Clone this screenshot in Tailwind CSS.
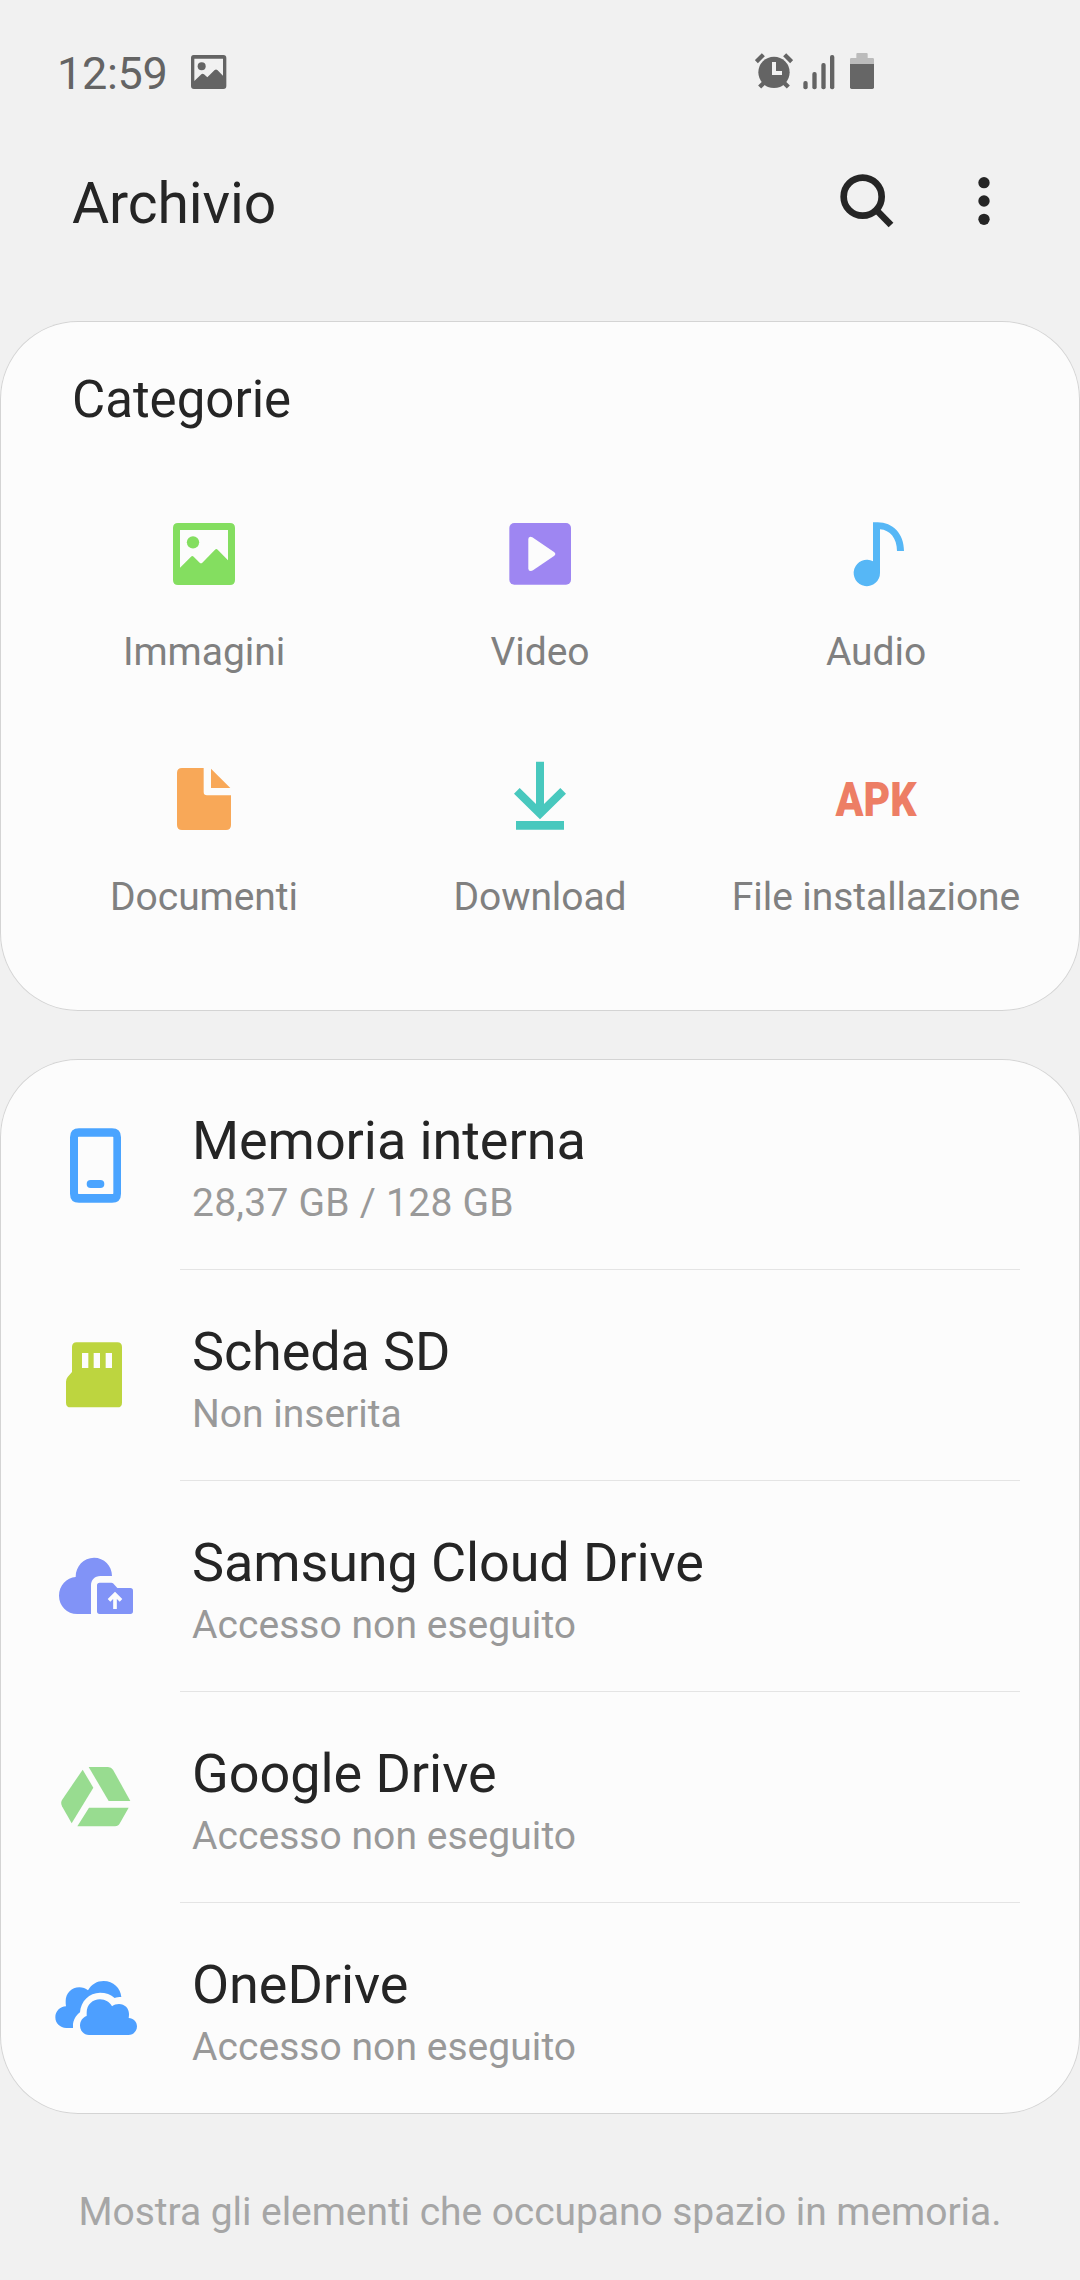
<!DOCTYPE html>
<html lang="it">
<head>
<meta charset="utf-8">
<title>Archivio</title>
<script src="https://cdn.jsdelivr.net/npm/@tailwindcss/browser@4"></script>
</head>
<body class="bg-[#f1f1f1] font-['Roboto',sans-serif] text-[#252525]">
<div class="flex h-[2280px] w-[1080px] flex-col overflow-hidden">

  <!-- Status bar -->
  <div class="mt-[44px] flex h-[60px] items-center pr-[206px] pl-[57px] text-[#646464]">
    <span class="w-[133px] text-[45px] leading-[60px] tracking-[-0.3px]">12:59</span>
    <svg class="h-[44px] w-[38px]" viewBox="570 66 114 132" fill="currentColor"><path fill-rule="evenodd" d="M581 75H670Q679 75 679 84V168Q679 177 670 177H582Q573 177 573 168V84Q573 75 581 75ZM583 86V153L604 133Q608 130 612 133L622 142L644 120Q648 117 652 120L669 137V86Z"/><circle cx="605" cy="109" r="12"/></svg>
    <svg class="ml-auto h-[44px] w-[38px]" viewBox="105 66 114 132" fill="currentColor"><circle cx="162" cy="127" r="47"/><path d="M156 96H168V123H186V135H156Z" fill="#f1f1f1"/><path d="M109 95L130 74M215 95L194 74M119 171L132 158M205 171L192 158" fill="none" stroke="currentColor" stroke-width="13"/></svg>
    <svg class="ml-[10px] h-[44px] w-[32px]" viewBox="249 66 96 132" fill="currentColor"><rect x="250" y="153" width="13" height="25" rx="6"/><rect x="277" y="126" width="13" height="52" rx="6"/><rect x="304" y="99" width="13" height="79" rx="6"/><rect x="330" y="75" width="13" height="103" rx="6"/></svg>
    <svg class="ml-[15px] h-[44px] w-[24px]" viewBox="390 66 72 132"><path d="M412 69H440Q443 69 443 72V84H458Q462 84 462 88V102H390V88Q390 84 394 84H409V72Q409 69 412 69Z" fill="#bcbcbc"/><path d="M390 102H462V172Q462 177 457 177H395Q390 177 390 172Z" fill="#666"/></svg>
  </div>

  <!-- App bar -->
  <header class="mt-[59px] flex h-[80px] items-center pr-[84px] pl-[72px]">
    <h1 class="pt-[2px] text-[57px] leading-[80px] tracking-[-0.1px]">Archivio</h1>
    <svg class="ml-auto h-[60px] w-[60px]" viewBox="348 429 180 180" fill="none" stroke="#252525" stroke-width="20"><circle cx="428" cy="500" r="57"/><path d="M469 540L513 585"/></svg>
    <svg class="ml-[76px] h-[60px] w-[24px]" viewBox="756 429 72 180" fill="#252525"><circle cx="792" cy="458" r="17"/><circle cx="792" cy="513" r="17"/><circle cx="792" cy="568" r="17"/></svg>
  </header>

  <!-- Categories -->
  <section class="mt-[78px] h-[690px] rounded-[78px] bg-[#fcfcfc] pt-[49px] inset-ring inset-ring-[#d4d4d4]">
    <h2 class="pl-[72px] text-[51px] leading-[60px]">Categorie</h2>
    <div class="mx-[36px] mt-[84px] grid grid-cols-3 gap-y-[83px] text-[39px] leading-[48px] tracking-[-0.06px] text-[#808080]">
      <div class="flex flex-col items-center gap-[34px]">
        <svg class="size-[80px]" viewBox="492 642 240 240" fill="#84de60"><path fill-rule="evenodd" d="M534 669H690Q705 669 705 684V840Q705 855 690 855H534Q519 855 519 840V684Q519 669 534 669ZM540 690V803L573 770Q577 766 581 770L599 788Q603 792 607 788L645 749Q649 745 653 749L684 781V690Z"/><circle cx="579" cy="727" r="18.500"/></svg>
        <span>Immagini</span>
      </div>
      <div class="flex flex-col items-center gap-[34px]">
        <svg class="size-[80px]" viewBox="300 42 240 240" fill="#9e86f2"><rect x="328" y="69" width="185" height="185" rx="15"/><path d="M385 117Q385 111 391 110Q394 110 397 112L462 156Q466 159 466 162Q466 165 462 168L399 211Q396 213 392 213Q385 213 385 206Z" fill="#fcfcfc"/></svg>
        <span>Video</span>
      </div>
      <div class="flex flex-col items-center gap-[34px]">
        <svg class="size-[80px]" viewBox="348 42 240 240" fill="#56b7f6"><path d="M459 67H473C518 67 552 101 552 153H531C531 115 510 90 480 88V218A39.500 39.500 0 1 1 459 184Z"/></svg>
        <span>Audio</span>
      </div>
      <div class="flex flex-col items-center gap-[34px]">
        <svg class="size-[80px]" viewBox="372 57 240 240" fill="#f8a858"><path d="M426 84H491V156Q491 166 501 166H573V255Q573 270 558 270H426Q411 270 411 255V99Q411 84 426 84Z"/><path d="M513 86L571 144H513Z"/></svg>
        <span>Documenti</span>
      </div>
      <div class="flex flex-col items-center gap-[34px]">
        <svg class="size-[80px]" viewBox="300 777 240 240" fill="#48c8be"><path d="M408 785H432V912L481 864L498 881L420 958L342 881L359 864L408 912Z"/><path d="M348 963H492V989H348Z"/></svg>
        <span>Download</span>
      </div>
      <div class="flex flex-col items-center gap-[34px]">
        <svg class="size-[80px] overflow-visible font-black tracking-normal" viewBox="0 0 80 80" fill="#ed7e65"><text x="-0.500" y="57" font-size="48" textLength="81" lengthAdjust="spacingAndGlyphs">APK</text></svg>
        <span class="whitespace-nowrap">File installazione</span>
      </div>
    </div>
  </section>

  <!-- Storage locations -->
  <section class="mt-[48px] h-[1055px] rounded-[78px] bg-[#fcfcfc] inset-ring inset-ring-[#d4d4d4]">
    <div class="flex h-[211px] pr-[60px] pl-[48px]">
      <svg class="mt-[58px] size-[96px]" viewBox="144 231 288 288" fill="#4aa4ff"><path fill-rule="evenodd" d="M237 265H336Q363 265 363 292V461Q363 488 336 488H237Q210 488 210 461V292Q210 265 237 265ZM236 290Q234 290 234 292V460Q234 462 236 462H338Q340 462 340 460V292Q340 290 338 290Z"/><rect x="260" y="420" width="53" height="24" rx="12"/></svg>
      <div class="ml-[36px] flex grow flex-col gap-[6px] border-b border-[#e4e4e4] pt-[49px] pl-[12px]">
        <div class="text-[54px] leading-[65px] tracking-[-0.08px]">Memoria interna</div>
        <div class="text-[39px] leading-[48px] tracking-[0.25px] text-[#999]">28,37 GB / 128 GB</div>
      </div>
    </div>
    <div class="flex h-[211px] pr-[60px] pl-[48px]">
      <svg class="mt-[58px] size-[96px]" viewBox="144 864 288 288" fill="#bdd53f"><path fill-rule="evenodd" d="M230 907H352Q366 907 366 921V1088Q366 1102 352 1102H212Q198 1102 198 1088V1025Q198 1017 203 1011L216 996V921Q216 907 230 907ZM246 939V984H265V939ZM281 939V984H300V939ZM317 939V984H336V939Z"/></svg>
      <div class="ml-[36px] flex grow flex-col gap-[6px] border-b border-[#e4e4e4] pt-[49px] pl-[12px]">
        <div class="text-[54px] leading-[65px] tracking-[-0.12px]">Scheda SD</div>
        <div class="text-[39px] leading-[48px] text-[#999]">Non inserita</div>
      </div>
    </div>
    <div class="flex h-[211px] pr-[60px] pl-[48px]">
      <svg class="mt-[58px] size-[96px]" viewBox="24 57 288 288" fill="#8193f7"><path d="M153 282H112C81 282 57 258 57 227C57 197 80 173 107 171C107 138 131 113 162 113C192 113 216 137 216 168H181C164 168 153 180 153 197Z"/><path d="M179 188H214Q217 188 219 190L232 204H271Q279 204 279 212V274Q279 282 271 282H179Q171 282 171 274V196Q171 188 179 188Z"/><path d="M225 267V224M207 241L225 223L243 241" fill="none" stroke="#fcfcfc" stroke-width="11"/></svg>
      <div class="ml-[36px] flex grow flex-col gap-[6px] border-b border-[#e4e4e4] pt-[49px] pl-[12px]">
        <div class="text-[54px] leading-[65px] tracking-[-0.12px]">Samsung Cloud Drive</div>
        <div class="text-[39px] leading-[48px] tracking-[0.05px] text-[#999]">Accesso non eseguito</div>
      </div>
    </div>
    <div class="flex h-[211px] pr-[60px] pl-[48px]">
      <svg class="mt-[58px] size-[96px]" viewBox="24 690 288 288" fill="#98dc90"><path d="M128 749L160 803L95 910L66 859Q61 849 66 840Z"/><path d="M146 741H204Q214 741 219 749L271 843H206Z"/><path d="M147 863H266L240 909Q235 919 225 919H112Z"/></svg>
      <div class="ml-[36px] flex grow flex-col gap-[6px] border-b border-[#e4e4e4] pt-[49px] pl-[12px]">
        <div class="text-[54px] leading-[65px] tracking-[-0.06px]">Google Drive</div>
        <div class="text-[39px] leading-[48px] tracking-[0.05px] text-[#999]">Accesso non eseguito</div>
      </div>
    </div>
    <div class="flex h-[211px] pr-[60px] pl-[48px]">
      <svg class="mt-[58px] size-[96px]" viewBox="24 183 288 288" fill="#4d9fff"><path d="M99 384H79C60 384 46 370 46 352C46 334 60 320 78 319C77 314 77 308 77 303C77 280 95 262 118 262C128 262 137 265 144 271C154 253 171 243 191 243C220 243 242 264 244 291C236 291 230 292 224 294C213 283 197 278 180 278C148 278 122 304 120 337C107 347 99 362 99 376Z"/><path d="M147 405C132 405 120 392 120 377C120 363 128 352 140 348V338C140 314 158 298 180 298C196 298 210 307 216 319C222 314 229 312 237 312C254 312 267 325 267 342Q267 349 266 354C280 354 291 365 291 379C291 394 280 405 265 405Z"/></svg>
      <div class="ml-[36px] flex grow flex-col gap-[6px] pt-[49px] pl-[12px]">
        <div class="text-[54px] leading-[65px] tracking-[-0.06px]">OneDrive</div>
        <div class="text-[39px] leading-[48px] tracking-[0.05px] text-[#999]">Accesso non eseguito</div>
      </div>
    </div>
  </section>

  <p class="mt-[74px] text-center text-[39px] leading-[48px] tracking-[-0.06px] whitespace-nowrap text-[#a6a6a6]">Mostra gli elementi che occupano spazio in memoria.</p>
</div>
</body>
</html>
